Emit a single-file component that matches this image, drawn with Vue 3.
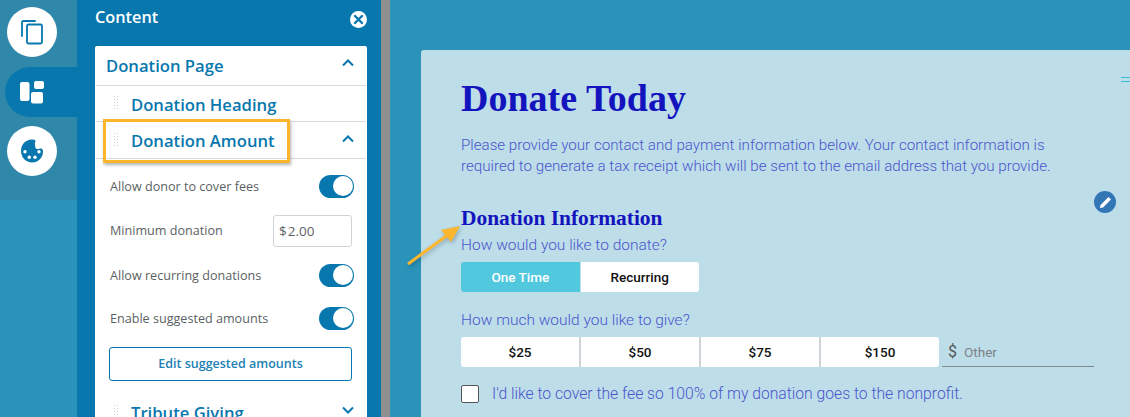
<script setup>
const settings = [
  { label: 'Allow donor to cover fees', kind: 'toggle' },
  { label: 'Minimum donation', kind: 'input' },
  { label: 'Allow recurring donations', kind: 'toggle' },
  { label: 'Enable suggested amounts', kind: 'toggle' }
]
const amounts = ['$25', '$50', '$75', '$150']
</script>

<template>
  <div class="page">
    <nav class="rail">
      <div class="rail-top">
        <div class="rail-btn">
          <svg width="22" height="25" viewBox="0 0 22 25" fill="none" stroke="#0877ae" stroke-width="1.800">
            <path d="M1 16V2.500C1 1.500 1.600 1 2.500 1H14" stroke-linecap="round" />
            <rect x="6" y="4.500" width="15" height="19" rx="1.500" />
          </svg>
        </div>
        <div class="rail-tab">
          <svg width="24" height="24" viewBox="0 0 24 24" fill="#fff">
            <rect x="0" y="2" width="9.500" height="19" rx="2" />
            <rect x="14" y="1" width="10" height="8" rx="2" />
            <rect x="11" y="12" width="12" height="11.500" rx="2" />
          </svg>
        </div>
        <div class="rail-btn">
          <svg width="24" height="24" viewBox="0 0 24 24">
            <path fill="#0877ae" d="M12 0.500C5.500 0.500 1 5.500 1 12C1 18.500 6 23.500 12 23.500C18.500 23.500 23 18.500 23 12.500C23 11 22.500 10 21.500 9.500C19.500 9 19 10.500 17 10C15 9.500 15.500 7.500 15 6C14.500 4.500 15.500 3 15.500 1.500C14.500 0.800 13 0.500 12 0.500Z" />
            <circle cx="5" cy="12.700" r="1.700" fill="#fff" />
            <circle cx="9.300" cy="18.300" r="1.700" fill="#fff" />
            <circle cx="15" cy="18.300" r="1.700" fill="#fff" />
            <circle cx="19" cy="12.700" r="1.700" fill="#fff" />
          </svg>
        </div>
      </div>
    </nav>

    <aside class="panel">
      <header class="panel-head">
        <h2>Content</h2>
        <svg class="close" width="17" height="17" viewBox="0 0 17 17">
          <circle cx="8.500" cy="8.500" r="8.500" fill="#fff" />
          <path d="M5 5L12 12M12 5L5 12" stroke="#0877ae" stroke-width="2.400" stroke-linecap="round" />
        </svg>
      </header>

      <div class="list">
        <div class="row row-page">
          <span class="row-title">Donation Page</span>
          <svg class="chev" width="12" height="8" viewBox="0 0 12 8" fill="none" stroke="#0877ae" stroke-width="2"><path d="M1 6.500L6 1.500L11 6.500" /></svg>
        </div>
        <div class="row row-sub">
          <span class="grip"></span>
          <span class="row-title">Donation Heading</span>
        </div>
        <div class="row row-sub row-amount">
          <span class="grip"></span>
          <span class="row-title">Donation Amount</span>
          <svg class="chev" width="12" height="8" viewBox="0 0 12 8" fill="none" stroke="#0877ae" stroke-width="2"><path d="M1 6.500L6 1.500L11 6.500" /></svg>
        </div>

        <div class="settings">
          <div v-for="s in settings" :key="s.label" class="setting" :class="s.kind">
            <span>{{ s.label }}</span>
            <span v-if="s.kind === 'toggle'" class="toggle"><i></i></span>
            <span v-else class="money"><b>$</b>2.00</span>
          </div>
          <button class="edit">Edit suggested amounts</button>
        </div>

        <div class="row row-sub row-tribute">
          <span class="grip"></span>
          <span class="row-title">Tribute Giving</span>
          <svg class="chev" width="12" height="8" viewBox="0 0 12 8" fill="none" stroke="#0877ae" stroke-width="2"><path d="M1 1.500L6 6.500L11 1.500" /></svg>
        </div>
      </div>
    </aside>

    <div class="splitter"></div>

    <main class="main">
      <section class="card">
        <span class="handle"></span>
        <h1>Donate Today</h1>
        <p class="intro">Please provide your contact and payment information below. Your contact information is required to generate a tax receipt which will be sent to the email address that you provide.</p>
        <span class="pen">
          <svg width="13" height="13" viewBox="0 0 13 13"><path fill="#fff" d="M9.500 1L12 3.500L4 11.500L1 12L1.500 9Z" /></svg>
        </span>
        <h3>Donation Information</h3>
        <p class="q q-first">How would you like to donate?</p>
        <div class="freq">
          <span class="on">One Time</span>
          <span>Recurring</span>
        </div>
        <p class="q q-second">How much would you like to give?</p>
        <div class="give">
          <div class="amounts">
            <span v-for="a in amounts" :key="a">{{ a }}</span>
          </div>
          <div class="other"><em>$</em><span>Other</span></div>
        </div>
        <label class="check">
          <span class="box"></span>
          <span>I'd like to cover the fee so 100% of my donation goes to the nonprofit.</span>
        </label>
      </section>
    </main>

    <div class="highlight"></div>
    <svg class="arrow" width="60" height="44" viewBox="0 0 60 44">
      <path d="M3 40L44 10" stroke="#fbb62d" stroke-width="3" />
      <path d="M55 2L46 18L36 6Z" fill="#fbb62d" />
    </svg>
  </div>
</template>

<style>
html, body { margin: 0; }
</style>

<style scoped>
.page {
  position: relative;
  display: flex;
  width: 1130px;
  height: 417px;
  overflow: hidden;
  background: #2b93b9;
  font-family: "Open Sans", sans-serif;
}
.rail { width: 77px; flex: none; }
.rail-top {
  height: 200px;
  background: #2f87aa;
  display: flex;
  flex-direction: column;
  padding-top: 7px;
  box-sizing: border-box;
}
.rail-btn {
  width: 50px;
  height: 50px;
  margin-left: 7px;
  border-radius: 50%;
  background: #fff;
  display: flex;
  align-items: center;
  justify-content: center;
}
.rail-tab {
  height: 50px;
  margin: 10px 0 9px 5px;
  border-radius: 25px 0 0 25px;
  background: #0877ae;
  display: flex;
  align-items: center;
  padding-left: 15px;
}
.panel {
  width: 304px;
  flex: none;
  box-sizing: border-box;
  padding: 0 14px 0 18px;
  background: #0877ae;
}
.panel-head {
  height: 46px;
  display: flex;
  justify-content: space-between;
  align-items: flex-start;
  padding-top: 6px;
  box-sizing: border-box;
}
.panel-head h2 {
  margin: 0;
  color: #fff;
  font-size: 16.300px;
  font-weight: 600;
  line-height: 22px;
}
.close { margin-top: 5px; }
.list {
  background: #fff;
  border-radius: 2px 2px 0 0;
  height: 420px;
}
.row {
  display: flex;
  align-items: center;
  margin: 0 1px;
  box-sizing: border-box;
  border-bottom: 1px solid #d5d9e0;
  padding: 0 10px;
}
.row-title {
  color: #0877ae;
  font-size: 16.650px;
  font-weight: 600;
  line-height: 22px;
  margin-top: 2px;
}
.row-page { height: 40px; padding-bottom: 2px; }
.row-sub { height: 36px; padding-left: 17px; }
.row-amount { height: 37px; }
.row-amount .chev { margin-bottom: 2px; }
.row-tribute { border-bottom: 0; margin-top: 12px; height: 38px; }
.chev { margin-left: auto; margin-right: 2px; margin-bottom: 4px; }
.grip {
  width: 6px;
  height: 15px;
  margin-right: 12px;
  margin-top: -2px;
  background-image: radial-gradient(circle, #d3d6da 0.8px, transparent 1px);
  background-size: 3px 3px;
}
.settings { padding: 16px 15px 0; }
.setting {
  display: flex;
  justify-content: space-between;
  align-items: center;
  color: #5b5f63;
  font-size: 12.600px;
}
.setting.toggle { height: 23px; }
.setting.input { height: 32px; margin-bottom: 17px; padding-bottom: 2px; box-sizing: border-box; }
.setting.toggle:nth-child(1) { margin-bottom: 17px; }
.setting.toggle:nth-child(3) { margin-bottom: 19.500px; }
.setting.toggle:nth-child(4) { margin-bottom: 17.500px; }
.setting .toggle {
  width: 35px;
  height: 23px;
  margin-right: -2px;
  border-radius: 12px;
  background: #0877ae;
  position: relative;
}
.setting .toggle i {
  position: absolute;
  right: 1px;
  top: 1px;
  width: 20px;
  height: 20px;
  border-radius: 50%;
  background: #fff;
}
.money {
  width: 79px;
  height: 32px;
  box-sizing: border-box;
  border: 1px solid #d0d4da;
  border-radius: 3px;
  padding-left: 5px;
  font-size: 13.500px;
  line-height: 30px;
  color: #5b5f63;
  position: relative;
  top: 1px;
}
.money b { font-weight: 400; margin-right: 1px; }
.edit {
  display: block;
  width: 243px;
  height: 34px;
  margin-left: -1px;
  box-sizing: border-box;
  border: 1px solid #0877ae;
  border-radius: 3px;
  background: #fff;
  color: #1b80b4;
  font: 600 12.500px/1 "Open Sans", sans-serif;
  padding: 0;
}
.splitter { width: 9px; flex: none; background: #8f8f8f; }
.main { flex: 1; min-width: 0; padding: 50px 0 0 31px; }
.card {
  position: relative;
  height: 420px;
  margin-right: -10px;
  padding: 26px 0 0 40px;
  box-sizing: border-box;
  background: #bddde9;
  border-radius: 3px 0 0 0;
  font-family: Roboto, sans-serif;
}
h1 {
  margin: 0;
  color: #1414be;
  font: 700 38px/44px "Liberation Serif", serif;
}
.intro {
  width: 600px;
  margin: 15px 0 0;
  color: #4a55cc;
  font-size: 15.150px;
  font-weight: 300;
  line-height: 21px;
}
h3 {
  margin: 28px 0 0;
  color: #1414be;
  font: 700 21.400px/26px "Liberation Serif", serif;
}
.q { margin: 0; color: #4a55cc; font-size: 15.500px; font-weight: 300; line-height: 20px; }
.q-first { margin-top: 4px; }
.q-second { margin-top: 18px; }
.pen {
  position: absolute;
  left: 673px;
  top: 141px;
  width: 22px;
  height: 22px;
  border-radius: 50%;
  background: #3276b6;
  display: flex;
  align-items: center;
  justify-content: center;
}
.handle {
  position: absolute;
  left: 700px;
  top: 27px;
  width: 12px;
  height: 3px;
  border-top: 1px solid #3cb8d8;
  border-bottom: 1px solid #3cb8d8;
}
.freq {
  display: flex;
  width: 238px;
  height: 30px;
  margin-top: 7px;
  gap: 1px;
  border-radius: 3px;
  overflow: hidden;
  font: 500 13.500px/30px Roboto, sans-serif;
}
.freq span { flex: 1; text-align: center; background: #fff; color: #111; }
.freq .on { background: #52c8de; color: #fff; }
.give { display: flex; align-items: flex-end; margin-top: 7px; }
.amounts {
  display: flex;
  width: 478px;
  height: 30px;
  gap: 2px;
  border-radius: 3px;
  overflow: hidden;
  background: #cfd4d8;
}
.amounts span {
  flex: 1;
  background: #fff;
  text-align: center;
  color: #111;
  font: 500 13.500px/30px Roboto, sans-serif;
}
.other {
  width: 152px;
  height: 30px;
  margin-left: 3px;
  border-bottom: 1px solid #7f8a90;
  box-sizing: border-box;
  display: flex;
  align-items: center;
  padding-left: 6px;
  gap: 7px;
  color: #7c8387;
  font-size: 13.500px;
}
.other em { font-style: normal; font-size: 16px; color: #555; }
.check {
  display: flex;
  align-items: center;
  gap: 13px;
  margin-top: 17px;
  color: #4a55cc;
  font-size: 15.700px;
  font-weight: 300;
}
.box {
  width: 16px;
  height: 16px;
  background: #fff;
  border: 1px solid #555;
  border-radius: 2px;
}
.highlight {
  position: absolute;
  left: 103px;
  top: 119px;
  width: 187px;
  height: 44px;
  box-sizing: border-box;
  border: 3.500px solid #fbb62d;
  box-shadow: 1px 2px 3px rgba(0, 0, 0, 0.3);
  pointer-events: none;
}
.arrow {
  position: absolute;
  left: 405px;
  top: 224px;
  filter: drop-shadow(1px 2px 2px rgba(0, 0, 0, 0.25));
}
</style>
